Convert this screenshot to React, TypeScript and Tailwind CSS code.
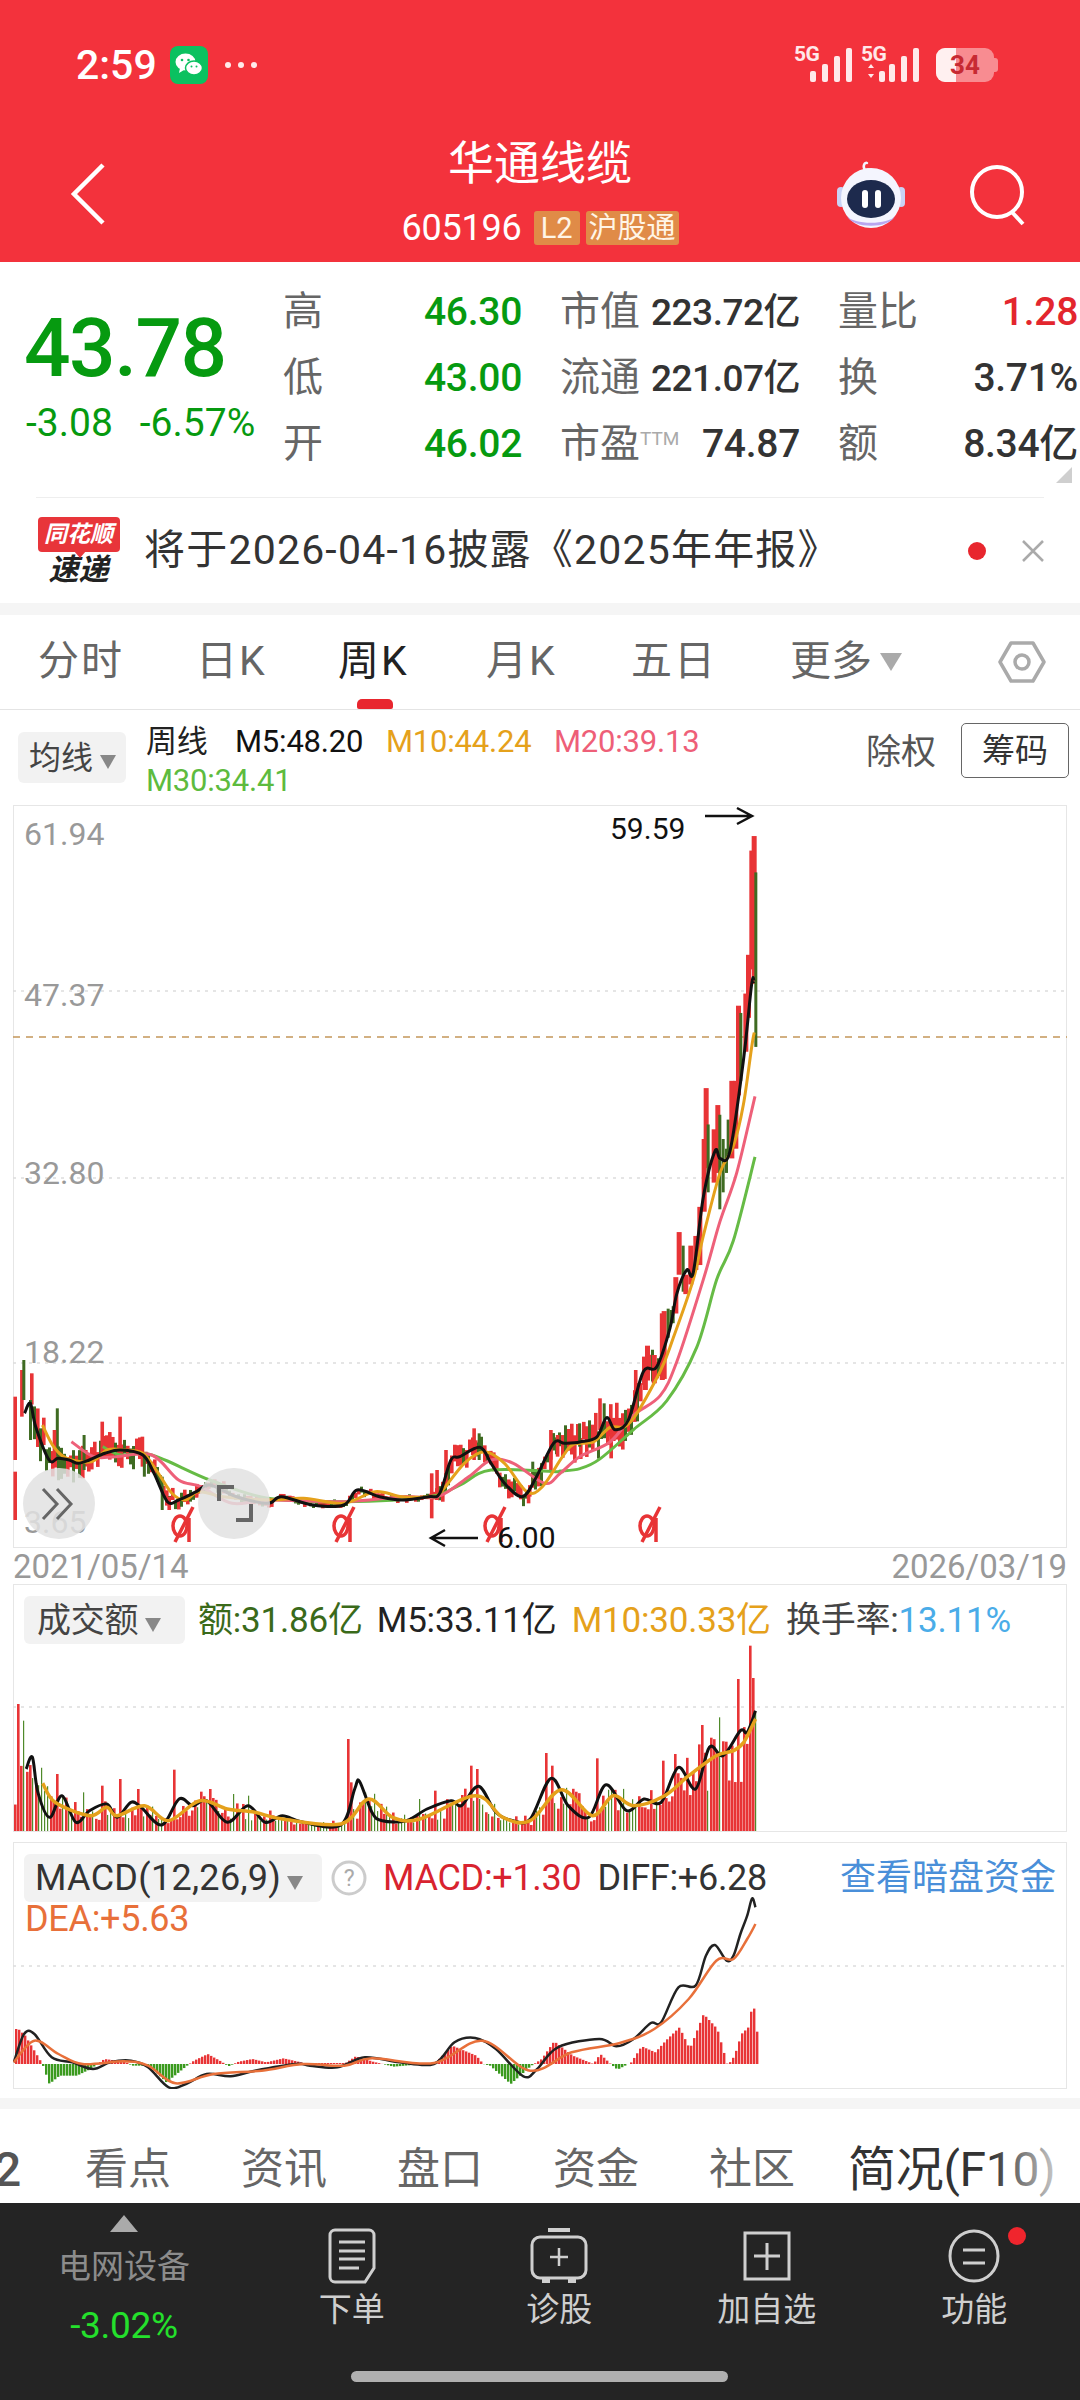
const z4 = (p: number[][]) => p.map(([x, y]) => [560 + x / 3, 790 + y / 2.063]);
const z5 = (p: number[][]) => p.map(([x, y]) => [x / 2.24, 1300 + y / 3]);
const z6 = (p: number[][]) => p.map(([x, y]) => [x / 1.452, 1580 + y / 3]);
const z7 = (p: number[][]) => p.map(([x, y]) => [x / 1.452, 1840 + y / 3]);

function curve(pts: number[][]) {
  let d = `M${pts[0][0].toFixed(1)} ${pts[0][1].toFixed(1)}`;
  for (let i = 0; i < pts.length - 1; i++) {
    const a = pts[Math.max(0, i - 1)];
    const b = pts[i];
    const c = pts[i + 1];
    const e = pts[Math.min(pts.length - 1, i + 2)];
    const c1 = [b[0] + (c[0] - a[0]) / 6, b[1] + (c[1] - a[1]) / 6];
    const c2 = [c[0] - (e[0] - b[0]) / 6, c[1] - (e[1] - b[1]) / 6];
    d += `C${c1[0].toFixed(1)} ${c1[1].toFixed(1)} ${c2[0].toFixed(1)} ${c2[1].toFixed(1)} ${c[0].toFixed(1)} ${c[1].toFixed(1)}`;
  }
  return d;
}

function lerp(pts: number[][], x: number) {
  if (x <= pts[0][0]) return pts[0][1];
  for (let i = 0; i < pts.length - 1; i++) {
    if (x <= pts[i + 1][0]) {
      const t = (x - pts[i][0]) / (pts[i + 1][0] - pts[i][0] || 1);
      return pts[i][1] + (pts[i + 1][1] - pts[i][1]) * t;
    }
  }
  return pts[pts.length - 1][1];
}

function rng(seed: number) {
  let s = seed;
  return () => {
    s = (s * 16807) % 2147483647;
    return s / 2147483647;
  };
}

const RED = '#e83436';
const DARK_GREEN = '#3f6b22';

const m5 = [
  ...z5([[55, 340], [68, 310], [80, 380], [110, 480], [130, 475], [155, 480], [175, 490], [200, 480], [235, 460], [270, 450], [320, 465], [345, 520], [375, 605], [400, 600], [440, 575], [470, 555], [530, 590], [600, 610], [630, 590], [700, 615], [770, 615], [800, 570], [850, 590], [900, 600], [960, 590], [985, 580], [1010, 480], [1030, 470], [1075, 442], [1100, 490], [1130, 550], [1170, 590], [1200, 535], [1240, 430], [1265, 430]]),
  ...z4([[60, 1345], [110, 1335], [140, 1295], [165, 1320], [205, 1300], [250, 1200], [290, 1190], [330, 1110], [350, 1040], [380, 990], [400, 995], [430, 840], [465, 745], [480, 760], [510, 745], [550, 560], [575, 400], [582, 395]]),
];
const m10 = [
  ...z5([[95, 375], [120, 440], [150, 475], [205, 485], [240, 450], [280, 450], [320, 460], [350, 510], [385, 580], [415, 600], [445, 575], [500, 590], [600, 600], [680, 595], [770, 610], [840, 575], [900, 590], [960, 590], [985, 580], [1040, 490], [1085, 455], [1130, 490], [1180, 575], [1215, 560], [1260, 470]]),
  ...z4([[40, 1350], [100, 1345], [150, 1315], [210, 1305], [300, 1200], [340, 1130], [400, 1010], [430, 920], [480, 790], [520, 735], [550, 650], [575, 530], [583, 500]]),
];
const m20 = [
  ...z5([[160, 425], [210, 470], [260, 470], [340, 465], [400, 540], [450, 560], [520, 610], [600, 600], [770, 605], [900, 590], [980, 590], [1050, 530], [1100, 480], [1150, 490], [1220, 550]]),
  ...z4([[0, 1410], [60, 1375], [150, 1345], [220, 1290], [300, 1250], [350, 1180], [430, 1010], [480, 890], [530, 790], [585, 632]]),
];
const m30 = [
  ...z5([[230, 440], [270, 465], [340, 465], [470, 540], [600, 595], [770, 605], [960, 590], [1030, 555], [1100, 510], [1250, 515]]),
  ...z4([[0, 1405], [60, 1400], [120, 1380], [220, 1320], [320, 1260], [410, 1150], [470, 1010], [520, 930], [585, 757]]),
];

// x, top, bottom, red?
const tailCandles = z4Candles([[305, 1075, 1215, 1], [320, 1070, 1130, 0], [335, 1065, 1100, 0], [340, 1005, 1080, 1], [350, 912, 1000, 1], [365, 940, 1035, 0], [370, 1000, 1040, 1], [385, 940, 1020, 1], [400, 920, 990, 1], [412, 860, 980, 1], [425, 720, 870, 1], [431, 615, 780, 1], [440, 690, 830, 0], [455, 700, 810, 1], [466, 650, 790, 1], [475, 670, 865, 0], [485, 720, 830, 0], [495, 740, 790, 0], [500, 680, 750, 0], [508, 600, 760, 1], [520, 600, 740, 1], [528, 445, 630, 1], [538, 460, 600, 0], [550, 420, 540, 1], [558, 340, 470, 1], [568, 125, 370, 1], [575, 95, 400, 1], [583, 170, 530, 0]]);
function z4Candles(list: number[][]) {
  return list.map(([x, t, b, r]) => [560 + x / 3, 790 + t / 2.063, 790 + b / 2.063, r]);
}
const spikes = [[30, 290, 480, 1], [30, 515, 660, 1], [45, 210, 350, 1], [50, 180, 300, 0], [65, 300, 420, 0], [125, 325, 470, 0], [118, 390, 480, 1], [225, 365, 470, 1], [265, 350, 470, 1], [185, 405, 510, 0], [315, 410, 500, 1], [320, 470, 530, 0], [360, 530, 630, 0], [375, 590, 630, 1], [963, 520, 655, 1], [975, 510, 600, 1], [995, 450, 560, 1], [1058, 385, 480, 1], [1070, 400, 480, 0], [1190, 485, 550, 0], [1180, 570, 610, 1], [1230, 390, 510, 1], [1245, 405, 470, 1], [1295, 370, 440, 0], [1340, 295, 390, 1], [1350, 310, 400, 0], [1365, 400, 475, 1], [1420, 210, 340, 1], [1440, 185, 270, 1], [1460, 165, 250, 1], [1478, 40, 240, 1], [1500, 30, 70, 0]].map(([x, t, b, r]) => [x / 2.24, 1300 + t / 3, 1300 + b / 3, r]);

const ampPts = [[13, 24], [130, 14], [170, 11], [270, 4], [430, 4], [440, 14], [520, 10], [570, 18], [662, 24]];
const rand = rng(4242);
const genCandles: number[][] = [];
for (let x = 30; x < 660; x += 3) {
  const c = lerp(m5, x) + (rand() - 0.5) * lerp(ampPts, x) * 0.9;
  const a = lerp(ampPts, x);
  genCandles.push([x, c - a * (0.25 + rand() * 0.7), c + a * (0.25 + rand() * 0.7), rand() < 0.62 ? 1 : 0]);
}
const candles = [...genCandles, ...spikes, ...tailCandles];

const volBlack = z6([[38, 570], [47, 535], [55, 640], [72, 715], [90, 650], [110, 730], [130, 695], [155, 675], [170, 715], [190, 670], [205, 685], [235, 738], [260, 660], [280, 680], [300, 665], [330, 730], [360, 680], [385, 730], [410, 710], [440, 730], [495, 738], [515, 630], [522, 607], [540, 700], [555, 725], [590, 725], [620, 690], [655, 665], [670, 680], [695, 622], [720, 700], [745, 725], [770, 720], [800, 598], [825, 680], [855, 715], [880, 617], [910, 695], [935, 660], [960, 670], [985, 565], [1010, 630], [1030, 505], [1050, 530], [1075, 455], [1085, 460], [1097, 395]]);
const volOrange = z6([[62, 613], [80, 670], [130, 710], [155, 685], [170, 710], [210, 680], [245, 725], [290, 665], [330, 690], [370, 700], [410, 720], [495, 735], [535, 660], [570, 715], [610, 720], [690, 650], [730, 715], [770, 725], [815, 632], [860, 710], [890, 650], [920, 680], [965, 650], [1000, 590], [1040, 530], [1065, 515], [1080, 490], [1097, 420]]);
const volSpikes = z6([[25, 375], [32, 425], [80, 585], [120, 640], [145, 620], [172, 600], [200, 630], [250, 572], [303, 630], [340, 645], [360, 650], [503, 480], [510, 610], [610, 660], [632, 635], [682, 560], [690, 570], [790, 522], [800, 560], [865, 538], [875, 650], [960, 545], [980, 525], [1020, 438], [1043, 415], [1068, 300], [1087, 200], [1091, 297], [1097, 400]]);
const volGreenAt = [120, 340, 360, 610, 32, 1043, 1097].map((v) => v / 1.452);

const volRand = rng(777);
const volBars: number[][] = [];
for (let x = 14; x <= 756; x += 3) {
  const line = lerp(volOrange, x);
  const top = 1832 - (1832 - line) * (0.55 + volRand() * 0.85);
  const red = volRand() < (x > 640 ? 0.92 : 0.6) ? 1 : 0;
  const s = volSpikes.find((p) => Math.abs(p[0] - x) < 1.5);
  if (s) {
    volBars.push([x, s[1], volGreenAt.some((g) => Math.abs(g - x) < 2) ? 0 : 1]);
  } else {
    volBars.push([x, top, red]);
  }
}

const macdDiff = z7([[20, 670], [35, 585], [50, 585], [75, 655], [105, 670], [135, 690], [160, 670], [190, 665], [215, 685], [245, 745], [270, 735], [300, 705], [335, 712], [370, 695], [430, 675], [450, 680], [490, 685], [530, 655], [580, 670], [630, 675], [660, 610], [690, 597], [720, 630], [760, 712], [780, 690], [810, 625], [870, 600], [895, 622], [920, 600], [945, 552], [960, 550], [985, 445], [1010, 440], [1025, 350], [1038, 318], [1055, 365], [1065, 350], [1075, 285], [1085, 230], [1092, 178], [1097, 205]]);
const macdDea = z7([[20, 670], [50, 605], [85, 645], [120, 675], [180, 667], [215, 680], [255, 733], [310, 705], [380, 695], [440, 675], [500, 680], [540, 658], [630, 672], [700, 605], [770, 695], [830, 640], [900, 612], [950, 570], [1000, 480], [1040, 365], [1065, 360], [1085, 300], [1097, 255]]);
const macdHist = z7([[25, 570], [35, 590], [60, 675], [70, 735], [85, 710], [110, 710], [130, 690], [140, 675], [150, 660], [180, 668], [190, 680], [215, 680], [240, 730], [270, 680], [280, 665], [300, 645], [320, 668], [330, 682], [345, 668], [365, 660], [385, 670], [410, 658], [440, 672], [500, 672], [515, 652], [540, 668], [570, 683], [630, 672], [655, 620], [690, 650], [700, 675], [710, 680], [740, 735], [770, 680], [785, 660], [803, 607], [830, 650], [860, 675], [870, 645], [885, 675], [895, 692], [915, 670], [930, 622], [950, 640], [965, 605], [985, 565], [1000, 630], [1020, 525], [1040, 570], [1055, 680], [1065, 650], [1075, 585], [1085, 565], [1092, 483], [1097, 578]]);
const ZERO = 1840 + 675 / 3;

function Tri({ className = 'border-t-[#888]' }: { className?: string }) {
  return <span className={`inline-block w-0 h-0 border-l-[8px] border-r-[8px] border-t-[14px] border-l-transparent border-r-transparent ${className}`} />;
}

function Signal({ arrows }: { arrows?: boolean }) {
  return (
    <div className="relative w-[60px] h-[36px]">
      <span className="absolute left-0 top-[-4px] text-[21px] leading-[22px] font-bold text-[#ffe9ea] tracking-[-0.5px]">5G</span>
      <svg width="60" height="36" viewBox="0 0 60 36" className="absolute left-0 top-0">
        {arrows ? <path d="M7 21l3-4 3 4zM7 27l3 4 3-4z" fill="#ffe9ea" /> : <rect x="16" y="24" width="6" height="11" rx="2" fill="#ffe9ea" />}
        {arrows && <rect x="18" y="24" width="6" height="11" rx="2" fill="#ffe9ea" />}
        <rect x="28" y="17" width="6" height="18" rx="2" fill="#ffe9ea" />
        <rect x="40" y="9" width="6" height="26" rx="2" fill="#ffe9ea" />
        <rect x="52" y="1" width="6" height="34" rx="2" fill="#ffe9ea" />
      </svg>
    </div>
  );
}

function StatusBar() {
  return (
    <div className="flex items-center h-[44px] text-white">
      <span className="ml-[76px] text-[41px] leading-none font-medium">2:59</span>
      <div className="ml-[13px] w-[38px] h-[38px] rounded-[8px] bg-[#0bc160] flex items-center justify-center">
        <svg width="30" height="28" viewBox="0 0 30 28">
          <ellipse cx="11.5" cy="11" rx="10" ry="8.5" fill="#fff" />
          <path d="M6 17l-1 5 5-3z" fill="#fff" />
          <ellipse cx="20" cy="17" rx="8.5" ry="7" fill="#fff" stroke="#0bc160" strokeWidth="1.5" />
          <circle cx="8" cy="9" r="1.3" fill="#0bc160" />
          <circle cx="14.5" cy="9" r="1.3" fill="#0bc160" />
          <circle cx="17.5" cy="15.5" r="1" fill="#0bc160" />
          <circle cx="22.5" cy="15.5" r="1" fill="#0bc160" />
        </svg>
      </div>
      <div className="ml-[17px] flex gap-[7px]">
        <span className="w-[6px] h-[6px] rounded-full bg-[#ffe9ea]" />
        <span className="w-[6px] h-[6px] rounded-full bg-[#ffe9ea]" />
        <span className="w-[6px] h-[6px] rounded-full bg-[#ffe9ea]" />
      </div>
      <div className="ml-auto flex items-center">
        <Signal />
        <div className="ml-[7px]"><Signal arrows /></div>
        <div className="relative ml-[15px] mr-[86px] w-[58px] h-[34px] rounded-[9px] bg-[#ffffff70] overflow-hidden">
          <div className="absolute left-0 top-0 h-full w-[20px] bg-[#fff0f0]" />
          <span className="absolute inset-0 flex items-center justify-center text-[26px] font-bold text-[#c72a33]">34</span>
        </div>
        <div className="absolute right-[82px] w-[4px] h-[14px] rounded-r-[3px] bg-[#ffffff70]" />
      </div>
    </div>
  );
}

function Robot() {
  return (
    <svg width="72" height="70" viewBox="0 0 72 70">
      <path d="M30 10c-3-4 0-8 2-7" stroke="#f3f5ff" strokeWidth="2.5" fill="none" strokeLinecap="round" />
      <circle cx="33" cy="11" r="3" fill="#f0c9d0" />
      <rect x="2" y="27" width="8" height="20" rx="4" fill="#c9d2f5" />
      <rect x="62" y="27" width="8" height="20" rx="4" fill="#c9d2f5" />
      <ellipse cx="36" cy="38" rx="30" ry="30" fill="#f4f5fe" />
      <path d="M12 56c6 9 42 9 48 0-6 13-42 13-48 0z" fill="#b9a6ef" />
      <ellipse cx="36" cy="39" rx="24" ry="19" fill="#1d2a4d" />
      <rect x="27" y="30" width="6" height="18" rx="3" fill="#fff" />
      <rect x="40" y="30" width="6" height="18" rx="3" fill="#fff" />
    </svg>
  );
}

function Header() {
  return (
    <div className="relative h-[262px] bg-[#f3323c] pt-[43px] text-white">
      <StatusBar />
      <div className="flex mt-[48px]">
        <div className="w-[360px] pl-[70px] pt-[28px]">
          <svg width="36" height="62" viewBox="0 0 36 62">
            <path d="M33 2L4 31l29 29" stroke="#fff" strokeWidth="4.5" fill="none" strokeLinejoin="miter" />
          </svg>
        </div>
        <div className="w-[360px] flex flex-col items-center">
          <span className="h-[56px] leading-[56px] text-[46px]">华通线缆</span>
          <div className="mt-[20px] flex items-center h-[34px]">
            <span className="text-[36px] leading-none tracking-[-0.2px]">605196</span>
            <span className="ml-[12px] w-[46px] h-[34px] rounded-[3px] bg-[#e08b47] flex items-center justify-center text-[29px] leading-none text-[#fff5e6]">L2</span>
            <span className="ml-[6px] w-[93px] h-[34px] rounded-[3px] bg-[#e08b47] flex items-center justify-center text-[29px] leading-none text-[#fff5e6] whitespace-nowrap">沪股通</span>
          </div>
        </div>
        <div className="w-[360px] flex pl-[115px] pt-[25px]">
          <Robot />
          <svg className="ml-[62px] mt-[4px]" width="58" height="62" viewBox="0 0 58 62">
            <circle cx="28" cy="28" r="25" stroke="#fff" strokeWidth="4" fill="none" />
            <path d="M42 47l12 13" stroke="#fff" strokeWidth="4" />
          </svg>
        </div>
      </div>
    </div>
  );
}

const GREEN = '#069a10';

function QuoteCell({ label, value, color, small, tight }: { label: string; value: string; color: string; small?: string; tight?: boolean }) {
  return (
    <div className="flex items-center justify-between h-[66px] whitespace-nowrap">
      <span className="text-[40px] leading-none text-[#666]">
        {label}
        {small && <span className="text-[19px] align-[12px] text-[#aaa]">{small}</span>}
      </span>
      <span className={`leading-none font-medium ${tight ? 'text-[37px] tracking-[-0.5px]' : 'text-[39px] tracking-[-0.3px]'}`} style={{ color }}>{value}</span>
    </div>
  );
}

function Quote() {
  return (
    <div className="relative flex h-[235px] bg-white">
      <div className="w-[283px] pl-[24px] pt-[36px]">
        <div className="h-[100px] leading-[100px] text-[82px] font-medium text-[#069a10] tracking-[-1.5px]">43.78</div>
        <div className="mt-[3px] flex h-[44px] items-center text-[39px] text-[#069a10]">
          <span className="ml-[2px]">-3.08</span>
          <span className="ml-[27px]">-6.57%</span>
        </div>
      </div>
      <div className="grid grid-cols-[239px_240px_240px] gap-x-[38px] pt-[17px] h-fit">
        <QuoteCell label="高" value="46.30" color={GREEN} />
        <QuoteCell label="市值" value="223.72亿" color="#333" tight />
        <QuoteCell label="量比" value="1.28" color="#e3262e" />
        <QuoteCell label="低" value="43.00" color={GREEN} />
        <QuoteCell label="流通" value="221.07亿" color="#333" tight />
        <QuoteCell label="换" value="3.71%" color="#333" />
        <QuoteCell label="开" value="46.02" color={GREEN} />
        <QuoteCell label="市盈" small="TTM" value="74.87" color="#333" />
        <QuoteCell label="额" value="8.34亿" color="#333" />
      </div>
      <svg className="absolute right-[8px] top-[205px]" width="16" height="16" viewBox="0 0 16 16">
        <path d="M16 0v16H0z" fill="#cfcfcf" />
      </svg>
    </div>
  );
}

function Notice() {
  return (
    <div className="bg-white">
      <div className="mx-[36px] h-[1px] bg-[#eeeeee]" />
      <div className="flex items-center h-[105px] pl-[37px]">
        <div className="w-[83px] flex flex-col items-center">
          <div className="relative w-[82px] h-[35px] rounded-[4px] bg-[#e8353a] flex items-center justify-center text-[23px] leading-none font-bold italic text-white whitespace-nowrap">
            同花顺
            <span className="absolute bottom-[-6px] left-[36px] w-0 h-0 border-l-[6px] border-r-[6px] border-t-[7px] border-l-transparent border-r-transparent border-t-[#e8353a]" />
          </div>
          <span className="mt-[3px] text-[30px] leading-[30px] font-bold italic text-[#222]">速递</span>
        </div>
        <span className="ml-[24px] text-[41px] leading-none text-[#333] tracking-[1.2px] whitespace-nowrap">将于2026-04-16披露《2025年年报》</span>
        <span className="absolute left-[968px] w-[18px] h-[18px] rounded-full bg-[#e8262e]" />
        <svg className="absolute left-[1021px]" width="24" height="24" viewBox="0 0 24 24">
          <path d="M2 2l20 20M22 2L2 22" stroke="#aaa" strokeWidth="2.5" />
        </svg>
      </div>
    </div>
  );
}

function Tabs() {
  const items = [
    { t: '分时', w: 'w-[158px]' },
    { t: '日K', w: 'w-[142px]' },
    { t: '周K', w: 'w-[148px]' },
    { t: '月K', w: 'w-[145px]' },
    { t: '五日', w: 'w-[159px]' },
  ];
  return (
    <div className="relative flex items-center h-[95px] pl-[38px] pb-[1px] bg-white border-b border-[#e4e4e4] text-[41px] leading-none text-[#666]">
      {items.map((i) => (
        <span key={i.t} className={`${i.w} whitespace-nowrap tracking-[2px] ${i.t === '周K' ? 'text-[#222]' : ''}`}>{i.t}</span>
      ))}
      <span>更多</span>
      <span className="ml-[8px] inline-block w-0 h-0 border-l-[11px] border-r-[11px] border-t-[18px] border-l-transparent border-r-transparent border-t-[#aaa]" />
      <svg className="ml-[96px]" width="48" height="44" viewBox="0 0 48 44">
        <path d="M13 3h22l11 19-11 19H13L2 22z" fill="none" stroke="#aaa" strokeWidth="3.5" strokeLinejoin="round" />
        <circle cx="24" cy="22" r="7" fill="none" stroke="#aaa" strokeWidth="3.5" />
      </svg>
      <span className="absolute left-[357px] bottom-0 w-[36px] h-[10px] rounded-t-[5px] rounded-b-[2px] bg-[#e8262e]" />
    </div>
  );
}

function Legend() {
  return (
    <div className="flex h-[95px] bg-white pl-[18px] relative">
      <div className="mt-[22px] w-[108px] h-[51px] rounded-[6px] bg-[#f2f2f2] flex items-center pl-[11px] text-[32px] leading-none text-[#444] whitespace-nowrap">
        均线
        <span className="ml-[7px]"><Tri /></span>
      </div>
      <div className="ml-[20px] w-[660px] flex flex-wrap content-start pt-[12px] text-[31px] leading-[39px] tracking-[-0.2px] whitespace-nowrap">
        <span className="text-[#222] w-[89px]">周线</span>
        <span className="text-[#111] w-[151px]">M5:48.20</span>
        <span className="text-[#e5a11b] w-[168px]">M10:44.24</span>
        <span className="text-[#ee5f78] w-[150px]">M20:39.13</span>
        <span className="text-[#5dbb3e] w-full">M30:34.41</span>
      </div>
      <span className="ml-[60px] mt-[23px] text-[35px] leading-[40px] text-[#555] whitespace-nowrap w-[70px]">除权</span>
      <div className="ml-[25px] mt-[13px] w-[108px] h-[55px] rounded-[5px] border border-[#666] flex items-center justify-center text-[33px] leading-none text-[#333]">筹码</div>
    </div>
  );
}

function Marker({ x }: { x: number }) {
  return (
    <g stroke={RED} strokeWidth="3.5" fill="none">
      <ellipse cx={x - 3} cy={1526} rx="7" ry="10" />
      <path d={`M${x + 6} 1518V1542M${x + 10} 1507L${x - 8} 1542`} />
    </g>
  );
}

function MainChart() {
  const labels = [
    { t: '61.94', y: 'top-[10px]' },
    { t: '47.37', y: 'top-[171px]' },
    { t: '32.80', y: 'top-[349px]' },
    { t: '18.22', y: 'top-[528px]' },
    { t: '3.65', y: 'top-[698px]' },
  ];
  return (
    <div className="relative mx-[13px] h-[743px] border border-[#e6e6e6] bg-white">
      <svg className="absolute left-[-1px] top-[-1px] block" width="1054" height="743" viewBox="13 805 1054 743">
        <g stroke="#dddddd" strokeWidth="1.5" strokeDasharray="3 5">
          <path d="M13 991H1067" />
          <path d="M13 1178H1067" />
          <path d="M13 1363H1067" />
        </g>
        <path d="M13 1037H1067" stroke="#c4975a" strokeWidth="1.5" strokeDasharray="7 6" />
        {candles.map((c, i) => (
          <rect key={i} x={c[0]} y={c[1]} width={c[3] ? (c[0] > 640 ? 5 : 3.6) : 3} height={c[2] - c[1]} fill={c[3] ? RED : DARK_GREEN} />
        ))}
        <path d={curve(m30)} stroke="#66bb45" strokeWidth="3" fill="none" />
        <path d={curve(m20)} stroke="#ee6079" strokeWidth="3" fill="none" />
        <path d={curve(m10)} stroke="#e5a11b" strokeWidth="3" fill="none" />
        <path d={curve(m5)} stroke="#111" strokeWidth="3" fill="none" />
        <path d="M705 816H751M737 808l15 8-15 8" stroke="#111" strokeWidth="2.5" fill="none" />
        <path d="M431 1538H478M445 1530l-14 8 14 8" stroke="#111" strokeWidth="2.5" fill="none" />
        {[183, 344, 495, 650].map((x) => <Marker key={x} x={x} />)}
      </svg>
      {labels.map((l) => (
        <span key={l.t} className={`absolute left-[10px] ${l.y} text-[32px] leading-[36px] text-[#999]`}>{l.t}</span>
      ))}
      <span className="absolute left-[596px] top-[7px] text-[30px] leading-[32px] text-[#111]">59.59</span>
      <span className="absolute left-[483px] top-[716px] text-[30px] leading-[32px] text-[#111]">6.00</span>
      <div className="absolute left-[9px] top-[662px] w-[72px] h-[71px] rounded-full bg-[#e2e2e2d9] flex items-center justify-center">
        <svg width="40" height="36" viewBox="0 0 40 36">
          <path d="M4 3l14 15L4 33M18 3l14 15-14 15" stroke="#666" strokeWidth="3" fill="none" />
        </svg>
      </div>
      <div className="absolute left-[184px] top-[662px] w-[72px] h-[71px] rounded-full bg-[#e2e2e2d9] flex items-center justify-center">
        <svg width="44" height="44" viewBox="0 0 44 44">
          <path d="M22 5H7v14M24 38h15V22" stroke="#666" strokeWidth="4" fill="none" />
        </svg>
      </div>
    </div>
  );
}

function Volume() {
  return (
    <div className="relative mx-[13px] h-[248px] border border-[#e6e6e6] bg-white">
      <svg className="absolute left-[-1px] top-[-1px] block" width="1054" height="248" viewBox="13 1585 1054 248">
        <path d="M13 1708H1067" stroke="#dddddd" strokeWidth="1.5" strokeDasharray="3 5" />
        {volBars.map((b, i) => (
          <rect key={i} x={b[0]} y={b[1]} width={b[2] ? 2.6 : 1.2} height={1832 - b[1]} fill={b[2] ? RED : '#4f8a2a'} />
        ))}
        <path d={curve(volBlack)} stroke="#111" strokeWidth="3" fill="none" />
        <path d={curve(volOrange)} stroke="#e5a11b" strokeWidth="3.5" fill="none" />
      </svg>
      <div className="absolute left-[10px] top-[11px] flex items-center text-[35px] leading-none whitespace-nowrap tracking-[-0.2px]">
        <div className="w-[161px] h-[48px] rounded-[6px] bg-[#f2f2f2] flex items-center pl-[13px] text-[#444] text-[34px]">
          成交额<span className="ml-[7px]"><Tri /></span>
        </div>
        <span className="ml-[13px] text-[#3a6a1a]">额:31.86亿</span>
        <span className="ml-[14px] text-[#222]">M5:33.11亿</span>
        <span className="ml-[15px] text-[#e5a11b]">M10:30.33亿</span>
        <span className="ml-[15px] text-[#444]">换手率:<span className="text-[#4aace8]">13.11%</span></span>
      </div>
    </div>
  );
}

function Macd() {
  return (
    <div className="relative mx-[13px] mt-[10px] h-[247px] border border-[#e6e6e6] bg-white">
      <svg className="absolute left-[-1px] top-[-1px] block" width="1054" height="247" viewBox="13 1843 1054 247">
        <path d="M13 1967H1067" stroke="#dddddd" strokeWidth="1.5" strokeDasharray="3 5" />
        {Array.from({ length: 248 }, (_, i) => {
          const x = 15 + i * 3;
          const y = lerp(macdHist, x);
          return (
            <rect
              key={i}
              x={x}
              y={Math.min(y, ZERO)}
              width="2.4"
              height={Math.abs(y - ZERO)}
              fill={y < ZERO ? RED : '#3a9a1e'}
            />
          );
        })}
        <path d={curve(macdDiff)} stroke="#222" strokeWidth="2.5" fill="none" />
        <path d={curve(macdDea)} stroke="#e8703a" strokeWidth="2.5" fill="none" />
      </svg>
      <div className="absolute left-[10px] top-[11px] flex items-center text-[36px] leading-none whitespace-nowrap tracking-[-0.3px]">
        <div className="w-[298px] h-[48px] rounded-[6px] bg-[#f2f2f2] flex items-center pl-[11px] text-[#333] tracking-[0.3px]">
          MACD(12,26,9)<span className="ml-[6px]"><Tri /></span>
        </div>
        <svg className="ml-[9px]" width="36" height="36" viewBox="0 0 36 36">
          <circle cx="18" cy="18" r="16" fill="none" stroke="#ccc" strokeWidth="3" />
          <text x="18" y="26" textAnchor="middle" fontSize="23" fill="#aaa" fontFamily="Roboto">?</text>
        </svg>
        <span className="ml-[16px] text-[#d8232f]">MACD:+1.30</span>
        <span className="ml-[16px] text-[#333]">DIFF:+6.28</span>
        <span className="ml-[73px] text-[36px] text-[#4a8fd9] tracking-[0px]">查看暗盘资金</span>
      </div>
      <span className="absolute left-[11px] top-[58px] text-[36px] leading-[36px] tracking-[-0.3px] text-[#e8703a]">DEA:+5.63</span>
    </div>
  );
}

function BottomTabs() {
  const items = ['看点', '资讯', '盘口', '资金', '社区'];
  return (
    <div className="relative flex items-center h-[94px] pt-[27px] bg-white overflow-hidden text-[43px] leading-none text-[#555] whitespace-nowrap">
      <span className="ml-[-32px] w-[117px] text-right pr-[71px] text-[48px] font-medium">L2</span>
      {items.map((t) => (
        <span key={t} className="w-[156px] text-[#666]">{t}</span>
      ))}
      <span className="ml-[-17px] text-[48px] text-[#333] tracking-[-0.3px]">简况(F10)</span>
      <div className="absolute right-0 top-0 h-full w-[90px] bg-gradient-to-r from-transparent to-white" />
    </div>
  );
}

function NavItem({ label, children }: { label: string; children: React.ReactNode }) {
  return (
    <div className="w-[207.5px] flex flex-col items-center pt-[24px]">
      <div className="h-[58px] flex items-center justify-center">{children}</div>
      <span className="mt-[5px] text-[33px] leading-[40px] text-[#cfcfcf] whitespace-nowrap">{label}</span>
    </div>
  );
}

function BottomNav() {
  return (
    <div className="relative h-[197px] bg-[#242424] flex">
      <div className="w-[248px] flex flex-col items-center pt-[12px]">
        <span className="w-0 h-0 border-l-[14px] border-r-[14px] border-b-[17px] border-l-transparent border-r-transparent border-b-[#aaa]" />
        <span className="mt-[15px] text-[33px] leading-[40px] text-[#8c8c8c] whitespace-nowrap">电网设备</span>
        <span className="mt-[20px] text-[37px] leading-[38px] text-[#24e02c] tracking-[-0.3px]">-3.02%</span>
      </div>
      <NavItem label="下单">
        <svg width="48" height="56" viewBox="0 0 48 56" fill="none" stroke="#cfcfcf" strokeWidth="3">
          <path d="M7 2h34a5 5 0 0 1 5 5v33l-9 14H7a5 5 0 0 1-5-5V7a5 5 0 0 1 5-5z" />
          <path d="M11 14h26M11 23h26M11 31h26M11 40h20" />
        </svg>
      </NavItem>
      <NavItem label="诊股">
        <svg width="58" height="56" viewBox="0 0 58 56" fill="none" stroke="#cfcfcf" strokeWidth="3">
          <path d="M18 2h22" strokeWidth="4" />
          <rect x="2" y="9" width="54" height="41" rx="8" />
          <path d="M29 20v18M20 29h18" strokeWidth="2.5" />
          <path d="M12 53h8M38 53h8" strokeWidth="4" />
        </svg>
      </NavItem>
      <NavItem label="加自选">
        <svg width="48" height="50" viewBox="0 0 48 50" fill="none" stroke="#cfcfcf" strokeWidth="3">
          <rect x="2" y="2" width="44" height="46" />
          <path d="M24 12v27M11 25h26" />
        </svg>
      </NavItem>
      <NavItem label="功能">
        <svg width="52" height="54" viewBox="0 0 52 54" fill="none" stroke="#cfcfcf" strokeWidth="3">
          <ellipse cx="26" cy="27" rx="24" ry="25" />
          <path d="M15 21h22M15 34h22" />
        </svg>
      </NavItem>
      <span className="absolute left-[1008px] top-[24px] w-[18px] h-[18px] rounded-full bg-[#f0252d]" />
      <span className="absolute left-[351px] top-[168px] w-[377px] h-[11px] rounded-full bg-[#b0b0b0]" />
    </div>
  );
}

export default function App() {
  return (
    <div className="relative w-[1080px] h-[2400px] overflow-hidden bg-white font-['Roboto','Noto_Sans_CJK_SC',sans-serif]">
      <Header />
      <Quote />
      <Notice />
      <div className="h-[12px] bg-[#f5f5f5]" />
      <Tabs />
      <Legend />
      <MainChart />
      <div className="flex justify-between h-[36px] mx-[13px] items-center text-[33px] leading-none text-[#999] bg-white">
        <span>2021/05/14</span>
        <span>2026/03/19</span>
      </div>
      <Volume />
      <Macd />
      <div className="mt-[9px] h-[11px] bg-[#f5f5f5]" />
      <BottomTabs />
      <BottomNav />
    </div>
  );
}
